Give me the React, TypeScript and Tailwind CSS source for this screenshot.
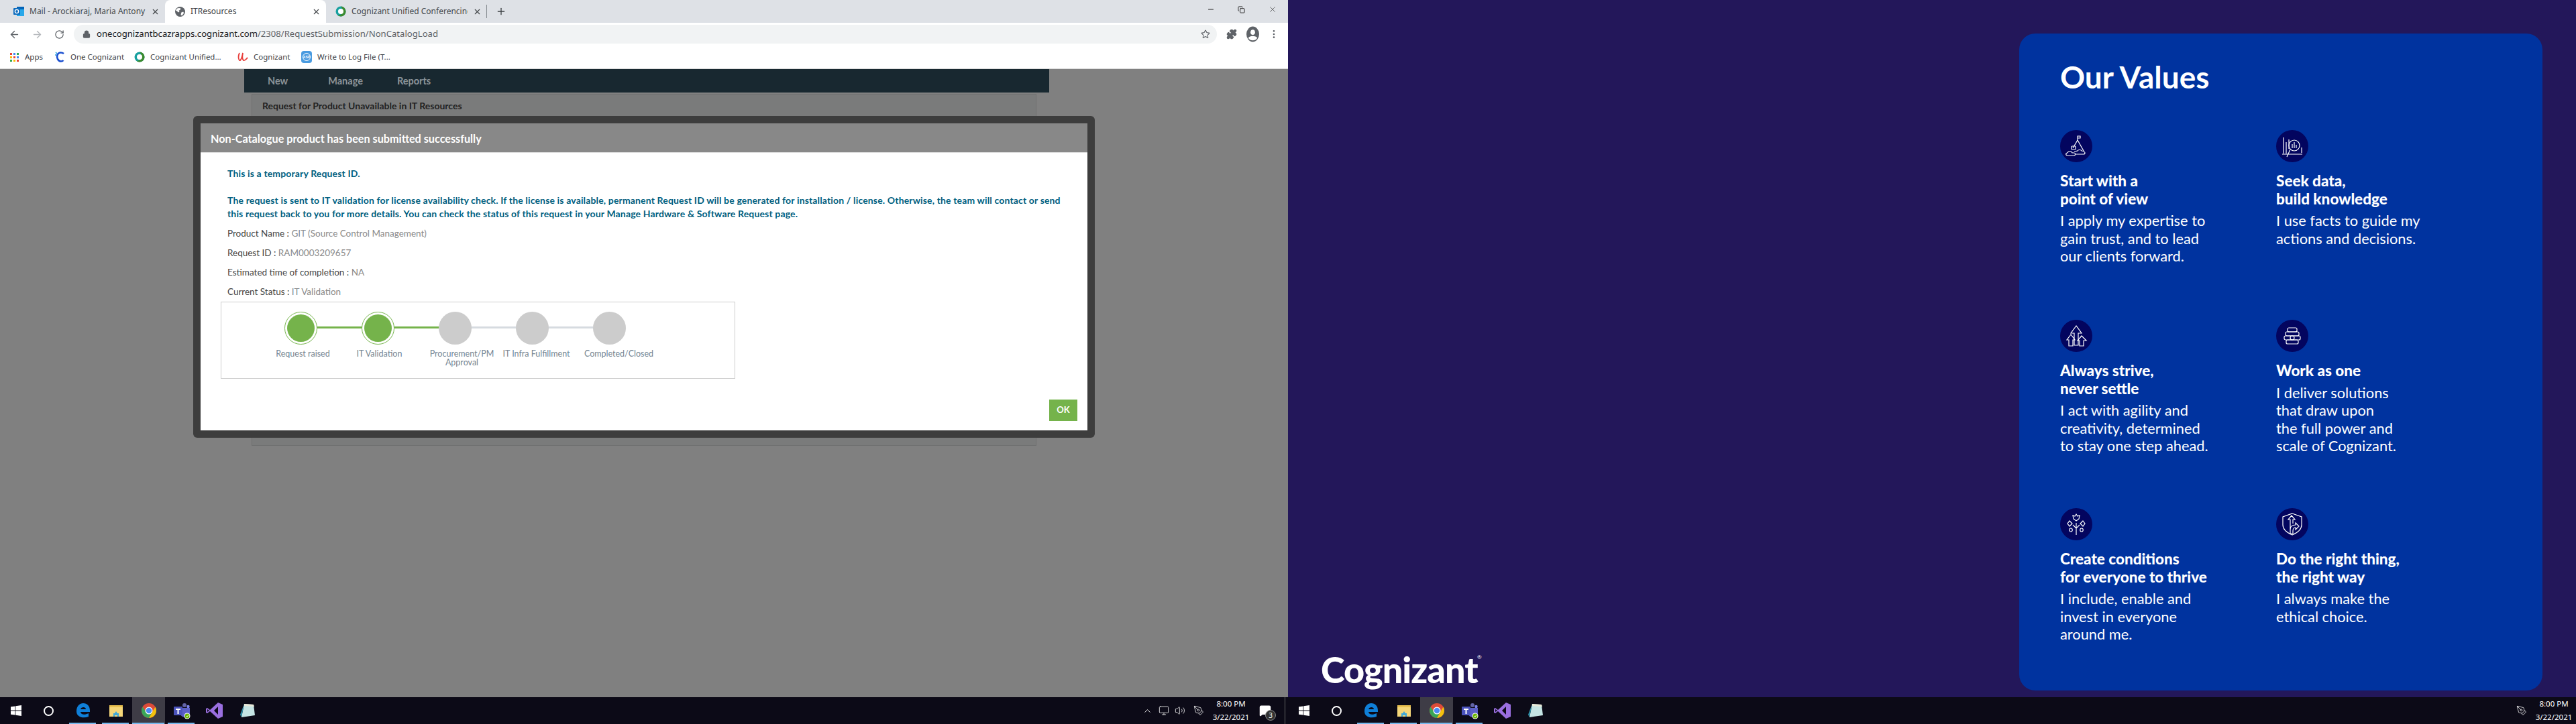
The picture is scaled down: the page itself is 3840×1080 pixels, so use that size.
import { ArrowLeft, ArrowRight, ChevronUp, Lock, Minus, MessageSquare, Monitor, MoreVertical, PenTool, Plus, RotateCw, Star, Volume2, X, Copy, Puzzle } from "lucide-react";
import { ReactNode } from "react";

const chromeFont = "font-['Noto_Sans',sans-serif]";
const modalFont = "font-['Lato',sans-serif]";

function OutlookIcon() {
  return (
    <svg width="16" height="16" viewBox="0 0 16 16">
      <rect x="5" y="1" width="11" height="14" fill="#28a8ea" />
      <rect x="5" y="1" width="11" height="4" fill="#0364b8" />
      <rect x="0" y="3" width="10" height="10" rx="1" fill="#0f6cbd" />
      <circle cx="5" cy="8" r="2.6" fill="none" stroke="#fff" strokeWidth="1.4" />
    </svg>
  );
}

function GlobeIcon() {
  return (
    <svg width="15" height="15" viewBox="0 0 16 16">
      <circle cx="8" cy="8" r="8" fill="#5f6368" />
      <path d="M3 3c2-1 5-1 6 0l-1 2-2 1 1 2-2 1-2-2-2-1zM10 9l3-1 1 2-3 4-2-1z" fill="#fff" />
    </svg>
  );
}

function ProfileIcon() {
  return (
    <svg width="19" height="24" viewBox="0 0 20 24">
      <ellipse cx="10" cy="12" rx="10" ry="12" fill="#5f6368" />
      <ellipse cx="10" cy="9" rx="3.500" ry="4" fill="#fff" />
      <path d="M3 18c2-4 12-4 14 0-3 5-11 5-14 0z" fill="#fff" />
    </svg>
  );
}

function WebexIcon() {
  return (
    <svg width="16" height="18" viewBox="0 0 16 18">
      <circle cx="8" cy="9" r="7.5" fill="#18a0a0" />
      <path d="M8 1.500a7.500 7.500 0 0 1 7.500 7.500c0 4-3.400 7.500-7.500 7.500-2 0-3.600-.7-5-2 3 .8 8-1 8-5.500 0-4-3-7.500-3-7.500z" fill="#3c8a2e" />
      <circle cx="8" cy="9" r="4" fill="#fff" />
    </svg>
  );
}

function AppsIcon() {
  const colors = ["#ea4335", "#4285f4", "#34a853", "#fbbc05", "#ea4335", "#4285f4", "#34a853", "#fbbc05", "#ea4335"];
  return (
    <div className="grid grid-cols-3 gap-[2px]">
      {colors.map((c, i) => (
        <span key={i} className="w-[3px] h-[3px]" style={{ backgroundColor: c }} />
      ))}
    </div>
  );
}

function CogCIcon() {
  return (
    <svg width="16" height="18" viewBox="0 0 16 18" fill="none">
      <path d="M14 4C11 1.500 6 2 4.500 6c-1.200 3.500.5 9 5 9.500 1.500.1 3-.4 4-1.500" stroke="#1a4fd0" strokeWidth="2.6" />
      <path d="M2 2l2 2M1 6h2" stroke="#18a0e0" strokeWidth="1.4" />
    </svg>
  );
}

function RedIcon() {
  return (
    <svg width="16" height="18" viewBox="0 0 16 18" fill="none" stroke="#e8403c" strokeWidth="1.8">
      <path d="M3 3C1 7 1 12 3 14c2 1 4-5 5-11-1 5-1 9 1 11 2 1 4-2 6-4" />
    </svg>
  );
}

function AspIcon() {
  return (
    <div className="w-4 h-[18px] rounded-sm bg-[#4a9be0] flex items-center justify-center">
      <div className="w-3 h-3 rounded-full border border-white flex items-center justify-center">
        <span className="text-[5px] leading-none text-white font-bold font-['Liberation_Sans',sans-serif]">ASP</span>
      </div>
    </div>
  );
}

function Tab({ icon, title, active }: { icon: ReactNode; title: string; active?: boolean }) {
  return (
    <div className={`w-[240px] h-[34px] flex items-center pl-[14px] pr-[8px] gap-[8px] ${active ? "bg-white rounded-t-lg" : ""}`}>
      <span className="shrink-0 w-4 flex justify-center">{icon}</span>
      <span className={`flex-1 text-xs whitespace-nowrap overflow-hidden ${active ? "text-[#3c4043]" : "text-[#45494d]"}`}>{title}</span>
      <X size={13} strokeWidth={2} className="text-[#3c4043] shrink-0" />
    </div>
  );
}

function BookmarkItem({ icon, label, width }: { icon: ReactNode; label: string; width: string }) {
  return (
    <div className={`flex items-center gap-[8px] ${width}`}>
      <span className="w-4 flex justify-center shrink-0">{icon}</span>
      <span className="text-[11.5px] text-[#3c4043] whitespace-nowrap">{label}</span>
    </div>
  );
}

function ChromeWindow() {
  return (
    <div className={`${chromeFont} shrink-0`}>
      <div className="h-[34px] bg-[#dee1e6] flex items-start pl-[6px]">
        <Tab icon={<OutlookIcon />} title="Mail - Arockiaraj, Maria Antony (C" />
        <Tab icon={<GlobeIcon />} title="ITResources" active />
        <Tab icon={<WebexIcon />} title="Cognizant Unified Conferencing" />
        <div className="w-px h-5 bg-[#80868b] mt-[7px] ml-[-1px]" />
        <Plus size={16} strokeWidth={2} className="ml-[13px] mt-[9px] text-[#3c4043]" />
        <div className="ml-auto flex items-center h-[28px] text-[#222]">
          <Minus size={12} className="mr-[34px]" />
          <Copy size={11} className="mr-[34px]" />
          <X size={14} strokeWidth={1} className="mr-[16px]" />
        </div>
      </div>
      <div className="h-[34px] bg-white flex items-center pl-[13px] text-[#5f6368]">
        <ArrowLeft size={17} />
        <ArrowRight size={17} className="ml-[17px] text-[#b5b8bc]" />
        <RotateCw size={15} className="ml-[17px]" />
        <div className="ml-[14px] w-[1704px] h-[28px] rounded-full bg-[#f1f3f4] flex items-center pl-[13px] pr-[10px]">
          <Lock size={12} strokeWidth={2.5} fill="#5f6368" />
          <span className="ml-[9px] text-[13.125px] text-[#202124]">
            onecognizantbcazrapps.cognizant.com<span className="text-[#5f6368]">/2308/RequestSubmission/NonCatalogLoad</span>
          </span>
          <Star size={14} className="ml-auto" />
        </div>
        <Puzzle size={16} fill="#5f6368" className="ml-[14px]" />
        <span className="ml-[14px]"><ProfileIcon /></span>
        <MoreVertical size={16} className="ml-[14px]" />
      </div>
      <div className="h-[35px] bg-white border-b border-[#d9d9d9] flex items-center pl-[13px]">
        <BookmarkItem icon={<AppsIcon />} label="Apps" width="w-[68px]" />
        <BookmarkItem icon={<CogCIcon />} label="One Cognizant" width="w-[119px]" />
        <BookmarkItem icon={<WebexIcon />} label="Cognizant Unified..." width="w-[154px]" />
        <BookmarkItem icon={<RedIcon />} label="Cognizant" width="w-[95px]" />
        <BookmarkItem icon={<AspIcon />} label="Write to Log File (T..." width="w-[140px]" />
      </div>
    </div>
  );
}

function Step({ label, labelClass, done, last }: { label: ReactNode; labelClass: string; done?: boolean; last?: boolean }) {
  return (
    <div className="w-[115px] relative">
      {!last && (
        <div className={`absolute left-[24px] top-[22px] w-[115px] h-[3px] ${done ? "bg-[#75b34b]" : "bg-[#d6dbe0]"}`} />
      )}
      {done ? (
        <div className="relative w-[49px] h-[49px] rounded-full bg-white border border-[#75b34b] p-[3px]">
          <div className="w-full h-full rounded-full bg-[#75b34b]" />
        </div>
      ) : (
        <div className="relative w-[49px] h-[49px] rounded-full bg-[#cccccc]" />
      )}
      <div className={`absolute w-[115px] top-[56px] text-center text-[12.5px] leading-[13px] text-[#748592] whitespace-nowrap ${labelClass}`}>{label}</div>
    </div>
  );
}

function InfoRow({ label, value }: { label: string; value: string }) {
  return (
    <p className="h-[29px] leading-[29px] text-[13.5px] text-[#444]">
      {label} : <span className="text-[#8a8a8a]">{value}</span>
    </p>
  );
}

function RequestModal() {
  return (
    <div className={`${modalFont} absolute left-[288px] top-[70px] w-[1344px] h-[480px] rounded-[6px] bg-[#3d3d3d] p-[11px]`}>
      <div className="h-full bg-white flex flex-col">
        <div className="h-[44px] bg-[#888888] border-b border-[#dddddd] pl-[15px] pt-[4px] flex items-center text-[16.2px] font-bold text-white shrink-0">
          Non-Catalogue product has been submitted successfully
        </div>
        <div className="pl-[40px] pt-[21px] text-[14px] font-bold text-[#00607f] leading-[20px] tracking-[0.15px]">
          <p>This is a temporary Request ID.</p>
          <p className="mt-[20px] whitespace-nowrap">
            The request is sent to IT validation for license availability check. If the license is available, permanent Request ID will be generated for installation / license. Otherwise, the team will contact or send
            <br />
            this request back to you for more details. You can check the status of this request in your Manage Hardware &amp; Software Request page.
          </p>
        </div>
        <div className="pl-[40px] pt-[5px] font-normal">
          <InfoRow label="Product Name" value="GIT (Source Control Management)" />
          <InfoRow label="Request ID" value="RAM0003209657" />
          <InfoRow label="Estimated time of completion" value="NA" />
          <InfoRow label="Current Status" value="IT Validation" />
        </div>
        <div className="ml-[30px] w-[767px] h-[115px] border border-[#cccccc] pl-[94px] pt-[14px] flex">
          <Step label="Request raised" labelClass="left-[-30px]" done />
          <Step label="IT Validation" labelClass="left-[-31px]" done />
          <Step label={<>Procurement/PM<br />Approval</>} labelClass="left-[-23px]" />
          <Step label="IT Infra Fulfillment" labelClass="left-[-27px]" />
          <Step label="Completed/Closed" labelClass="left-[-19px]" last />
        </div>
        <div className="flex justify-end pr-[15px] mt-[31px]">
          <button className="w-[42px] h-[32px] bg-[#75b34b] text-white text-[13px] font-bold">OK</button>
        </div>
      </div>
    </div>
  );
}

function TaskIcon({ children, open, active }: { children: ReactNode; open?: boolean; active?: boolean }) {
  return (
    <div className={`w-[49px] h-10 flex items-center justify-center relative ${active ? "bg-[#3e3c46]" : ""}`}>
      {children}
      {open && <div className={`absolute bottom-0 h-[2px] bg-[#76b9ed] ${active ? "left-0 right-[1px]" : "left-[4px] right-[5px]"}`} />}
    </div>
  );
}

function TaskbarIcons() {
  return (
    <>
      <div className="w-12 flex justify-center">
        <svg width="16" height="16" viewBox="0 0 16 16" fill="#fff">
          <path d="M0 2.300l6.500-.9v6.200H0zM7.300 1.300L16 0v7.600H7.300zM0 8.400h6.500v6.200L0 13.700zM7.300 8.400H16V16l-8.700-1.300z" />
        </svg>
      </div>
      <div className="w-12 flex justify-center">
        <div className="w-[15px] h-[15px] rounded-full border-2 border-white" />
      </div>
      <div className="w-[3px]" />
      <TaskIcon open>
        <svg width="22" height="24" viewBox="0 0 22 24">
          <path d="M1 13C1 5 6 1 11 1c6 0 10 4 10 11v2H7c.3 4 6 5 12 2v5c-8 3-18 1-18-8zm6-3h8c0-4-7-4-8 0z" fill="#0f7fd8" />
        </svg>
      </TaskIcon>
      <TaskIcon open>
        <svg width="22" height="20" viewBox="0 0 22 20">
          <path d="M1 2h7l2 2h11v15H1z" fill="#f5d679" />
          <rect x="1" y="2" width="20" height="3" fill="#e8c050" />
          <path d="M7 19v-5h2l2-3 2 3h2v5h-2v-2H9v2z" fill="#3fa8d8" />
        </svg>
      </TaskIcon>
      <TaskIcon open active>
        <svg width="24" height="24" viewBox="0 0 24 24">
          <circle cx="12" cy="12" r="11" fill="#dd4b39" />
          <path d="M21.500 6.500A11 11 0 0 1 12 23l5-9z" fill="#f4c20d" />
          <path d="M2.500 6.500A11 11 0 0 0 12 23l5-9-5 2.500-4.500-3z" fill="#3aa757" />
          <circle cx="12" cy="12" r="5.500" fill="#fff" />
          <circle cx="12" cy="12" r="4.200" fill="#4b8bf5" />
        </svg>
      </TaskIcon>
      <TaskIcon open>
        <svg width="26" height="26" viewBox="0 0 26 26">
          <circle cx="17" cy="5" r="3" fill="#6264a7" />
          <circle cx="22.500" cy="7" r="2.200" fill="#7b83eb" />
          <path d="M10 9h15v8c0 4-3 6-7 6s-7-3-8-6z" fill="#5b5fc7" />
          <rect x="1" y="7" width="13" height="13" rx="1" fill="#4b53bc" />
          <path d="M4 10h7v2H8.500v6h-2v-6H4z" fill="#fff" />
          <circle cx="21" cy="21" r="4.500" fill="#fff" />
          <circle cx="21" cy="21" r="3.500" fill="#6bb700" />
          <path d="M19.300 21l1.300 1.300 2.200-2.400" stroke="#fff" fill="none" />
        </svg>
      </TaskIcon>
      <TaskIcon>
        <svg width="25" height="24" viewBox="0 0 25 24">
          <path d="M18 0l7 3v18l-7 3L6 13l-4 3-2-1V9l2-1 4 3z" fill="#9a6fe0" />
          <path d="M18 6l-6 6 6 6z" fill="#0c0a17" />
          <path d="M2 10l3 2-3 2z" fill="#0c0a17" />
        </svg>
      </TaskIcon>
      <TaskIcon>
        <svg width="24" height="24" viewBox="0 0 24 24">
          <path d="M7 2l14 1 2 16-20 3z" fill="#c5e4e4" />
          <path d="M7 2L1 18l2 4 4-20z" fill="#2f8fa8" />
          <path d="M7 2l14 1 1 3-15-1z" fill="#e8e8d8" />
        </svg>
      </TaskIcon>
    </>
  );
}

function Tray({ full }: { full?: boolean }) {
  return (
    <div className="ml-auto h-full flex items-center text-white font-['Noto_Sans',sans-serif]">
      {full && (
        <>
          <ChevronUp size={15} strokeWidth={1.5} className="mr-[9px]" />
          <Monitor size={16} strokeWidth={1.2} className="mr-[8px]" />
          <Volume2 size={16} strokeWidth={1.2} className="mr-[12px]" />
        </>
      )}
      <PenTool size={16} strokeWidth={1.2} className="mr-[7px]" />
      <div className="text-[11.5px] leading-[20px] text-center w-[66px]">
        <div>8:00 PM</div>
        <div>3/22/2021</div>
      </div>
      {full && (
        <>
          <div className="relative ml-[6px] mr-[17px] w-[24px] flex justify-center">
            <MessageSquare size={18} fill="#fff" />
            <span className="absolute -right-[4px] -bottom-[6px] w-[16px] h-[16px] rounded-full bg-[#333] border border-[#888] text-[10px] leading-[14px] text-center">3</span>
          </div>
          <div className="w-px h-full bg-[#666] mr-[4px]" />
        </>
      )}
    </div>
  );
}

function LeftMonitor() {
  return (
    <div className="w-[1920px] h-[1080px] flex flex-col bg-[#808080] shrink-0">
      <ChromeWindow />
      <div className="flex-1 relative min-h-0">
        <div className="w-[1200px] ml-[364px]">
          <div className={`${modalFont} h-[35px] bg-[#182830] flex items-center pl-[35px] text-[14.5px] font-bold text-[#8c9499]`}>
            <span>New</span>
            <span className="ml-[60px]">Manage</span>
            <span className="ml-[51px]">Reports</span>
          </div>
          <div className={`${modalFont} ml-[11px] mr-[19px] mt-[2px] h-[525px] bg-[#7a7b7b] border border-[#6f7070] pl-[15px] pt-[6px] text-[14px] font-bold text-[#222]`}>
            Request for Product Unavailable in IT Resources
          </div>
        </div>
        <RequestModal />
      </div>
      <div className="h-10 bg-[#0c0a17] flex items-center shrink-0">
        <TaskbarIcons />
        <Tray full />
      </div>
    </div>
  );
}

function ValueIcon({ children }: { children: ReactNode }) {
  return (
    <div className="w-12 h-12 rounded-full bg-[#03055f] flex items-center justify-center">
      <svg width="36" height="36" viewBox="0 0 36 36" fill="none" stroke="#fff" strokeWidth="1.2">
        {children}
      </svg>
    </div>
  );
}

const values: { title: string[]; body: string[]; icon: ReactNode }[] = [
  {
    title: ["Start with a", "point of view"],
    body: ["I apply my expertise to", "gain trust, and to lead", "our clients forward."],
    icon: (
      <>
        <path d="M20 9V3h4v3h-4M20 9L13 21M20 9l9 16" />
        <rect x="11" y="18" width="6" height="5" rx="1" />
        <path d="M5 32c-3 0-3-4 0-4 1-3 6-3 7 0h3c2 0 2 4 0 4zM15 26l5-1c1-2 5-2 6 0 3 0 5 2 5 3s-1 2-2 2H16" />
      </>
    ),
  },
  {
    title: ["Seek data,", "build knowledge"],
    body: ["I use facts to guide my", "actions and decisions."],
    icon: (
      <>
        <path d="M5 5v24M9 12v17M13 8v14M3 30h30" />
        <circle cx="21" cy="17" r="8" />
        <path d="M15 23L10 34M18 15v6M21 12v9M24 16v5M32 20v8" />
      </>
    ),
  },
  {
    title: ["Always strive,", "never settle"],
    body: ["I act with agility and", "creativity, determined", "to stay one step ahead."],
    icon: (
      <>
        <path d="M18 3l-8 11h5v18h6V14h5z" />
        <path d="M10 16l-6 8h3v9h6v-9h3zM26 18l-6 7h3v8h6v-8h4z" />
      </>
    ),
  },
  {
    title: ["Work as one"],
    body: ["I deliver solutions", "that draw upon", "the full power and", "scale of Cognizant."],
    icon: (
      <>
        <rect x="11" y="6" width="14" height="6" rx="2" />
        <rect x="8" y="12" width="20" height="6" rx="2" />
        <rect x="6" y="18" width="24" height="6" rx="2" />
        <rect x="9" y="24" width="18" height="6" rx="2" />
        <circle cx="18" cy="21" r="3" />
      </>
    ),
  },
  {
    title: ["Create conditions", "for everyone to thrive"],
    body: ["I include, enable and", "invest in everyone", "around me."],
    icon: (
      <>
        <path d="M18 16V34M18 24l-5-5M18 24l5-5" />
        <path d="M18 3l2 3 3-1-1 5-4 3-4-3-1-5 3 1z" />
        <path d="M8 13l4 4-4 4-3-4zM28 13l3 4-3 4-4-4zM10 24c3 0 3 5 0 5s-3-5 0-5zM26 24c3 0 3 5 0 5s-3-5 0-5z" />
      </>
    ),
  },
  {
    title: ["Do the right thing,", "the right way"],
    body: ["I always make the", "ethical choice."],
    icon: (
      <>
        <path d="M18 2l14 5v12c0 7-7 12-14 15C11 31 4 26 4 19V7z" />
        <path d="M15 26V11h-3l5-6 5 6h-3v6M15 26c0-5 3-7 8-7v-3l5 5-5 5v-3c-3 0-4 2-4 5v4h-4z" />
      </>
    ),
  },
];

function ValueCard({ title, body, icon }: (typeof values)[number]) {
  return (
    <div>
      <ValueIcon>{icon}</ValueIcon>
      <div className="mt-[15px] text-[22.5px] leading-[26.5px] font-black">
        {title.map((t) => (
          <div key={t}>{t}</div>
        ))}
      </div>
      <div className="mt-[6px] text-[21.8px] leading-[26.5px] font-normal">
        {body.map((b) => (
          <div key={b}>{b}</div>
        ))}
      </div>
    </div>
  );
}

function RightMonitor() {
  return (
    <div className="w-[1920px] h-[1080px] flex flex-col bg-[#23175a] shrink-0">
      <div className="h-[1040px] flex font-['Lato',sans-serif] text-white">
        <div className="flex-1 flex items-end pl-[49px] pb-[6px]">
          <span className="relative text-[54px] leading-[70px] font-black tracking-[-1px]">
            Cognizant
            <span className="absolute right-[-5px] top-[12px] text-[8px] leading-[8px] font-normal">®</span>
          </span>
        </div>
        <div className="w-[780px] mr-[50px] mt-[50px] mb-[10px] rounded-[24px] bg-[#00339f] pl-[61px] pt-[38px]">
          <h1 className="text-[46px] leading-[54px] font-bold">Our Values</h1>
          <div className="mt-[52px] grid grid-cols-[322px_1fr] grid-rows-[283px_281px_auto]">
            {values.map((v) => (
              <ValueCard key={v.title[0]} {...v} />
            ))}
          </div>
        </div>
      </div>
      <div className="h-10 bg-[#0c0a17] flex items-center shrink-0">
        <TaskbarIcons />
        <Tray />
      </div>
    </div>
  );
}

export default function App() {
  return (
    <div className="w-[3840px] h-[1080px] flex overflow-hidden">
      <LeftMonitor />
      <RightMonitor />
    </div>
  );
}
